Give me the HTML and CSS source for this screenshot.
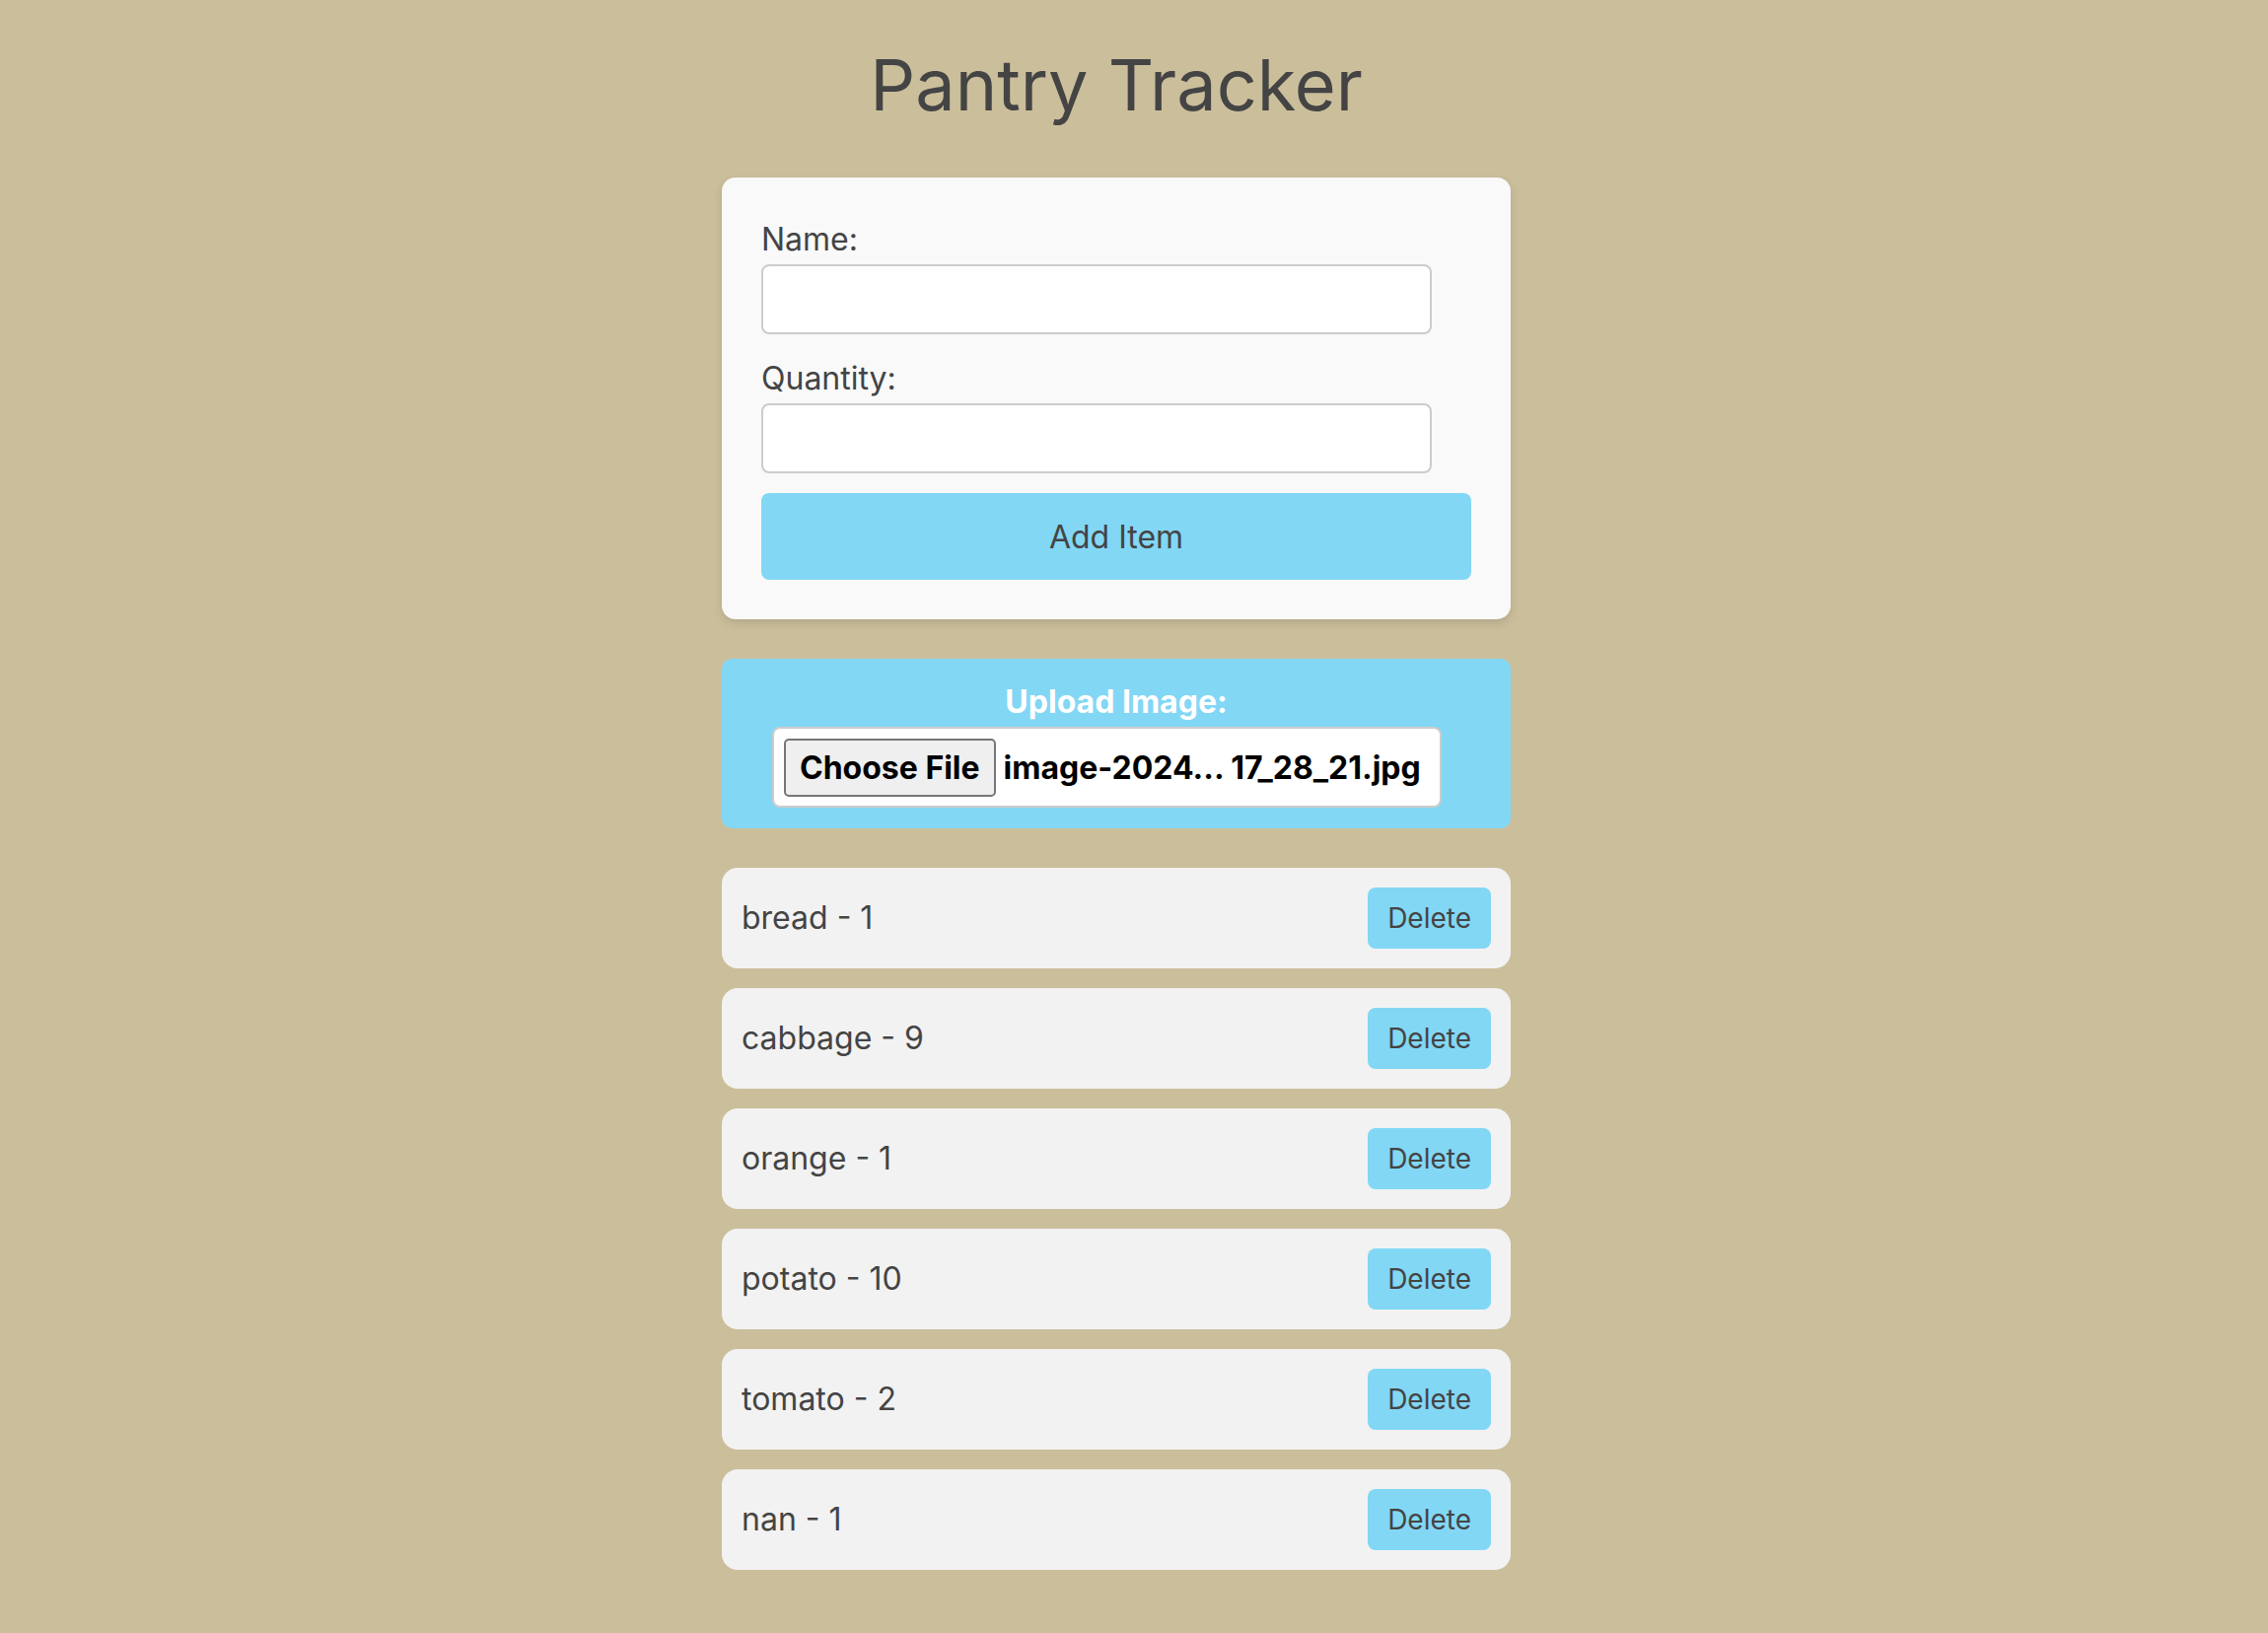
FILE: index.html
```html
<!DOCTYPE html>
<html lang="en">
<head>
<meta charset="utf-8">
<title>Pantry Tracker</title>
<link rel="stylesheet" href="styles.css">
</head>
<body>
<div class="app">
  <h1 class="title">Pantry Tracker</h1>

  <form class="card">
    <label class="field-label" for="name">Name:</label>
    <input class="text-input" id="name" type="text">
    <label class="field-label" for="qty">Quantity:</label>
    <input class="text-input" id="qty" type="text">
    <button class="add-btn" type="button">Add Item</button>
  </form>

  <div class="upload">
    <div class="upload-label">Upload Image:</div>
    <div class="file-input">
      <span class="file-btn">Choose File</span>
      <span class="file-name">image-2024... 17_28_21.jpg</span>
    </div>
  </div>

  <ul class="items">
    <li class="item"><span class="item-text">bread - 1</span><button class="del-btn" type="button">Delete</button></li>
    <li class="item"><span class="item-text">cabbage - 9</span><button class="del-btn" type="button">Delete</button></li>
    <li class="item"><span class="item-text">orange - 1</span><button class="del-btn" type="button">Delete</button></li>
    <li class="item"><span class="item-text">potato - 10</span><button class="del-btn" type="button">Delete</button></li>
    <li class="item"><span class="item-text">tomato - 2</span><button class="del-btn" type="button">Delete</button></li>
    <li class="item"><span class="item-text">nan - 1</span><button class="del-btn" type="button">Delete</button></li>
  </ul>
</div>
</body>
</html>
```

FILE: styles.css
```css
* { box-sizing: border-box; }

html, body {
  margin: 0;
  background: #cbbe9b;
}

body {
  padding: 0 36px 0 0;
  font-family: Inter, "Noto Sans", "Liberation Sans", sans-serif;
  color: #444;
}

.app {
  width: 800px;
  margin: 0 auto;
  display: flex;
  flex-direction: column;
}

.title {
  margin: 0 0 51px;
  padding-top: 42px;
  font-size: 72px;
  font-weight: 400;
  line-height: 87px;
  text-align: center;
  color: #444;
}

.card {
  background: #f9f9f9;
  border-radius: 14px;
  padding: 44px 40px 40px;
  box-shadow: 0 4px 10px rgba(0, 0, 0, 0.12);
  display: flex;
  flex-direction: column;
}

.field-label {
  display: block;
  font-size: 32px;
  line-height: 38px;
  margin-bottom: 6px;
  color: #444;
}

.text-input {
  width: 680px;
  height: 71px;
  border: 2px solid #ccc;
  border-radius: 8px;
  background: #fff;
  margin: 0 0 26px;
  font-family: inherit;
  font-size: 32px;
  padding: 0 12px;
}

.text-input + .add-btn { margin-top: -6px; }

.add-btn {
  width: 100%;
  height: 88px;
  border: none;
  border-radius: 8px;
  background: #82d7f5;
  color: #444;
  font-family: inherit;
  font-size: 32px;
  cursor: pointer;
}

.upload {
  margin-top: 40px;
  background: #82d7f5;
  border-radius: 10px;
  padding: 25px 0 21px;
  display: flex;
  flex-direction: column;
}

.upload-label {
  text-align: center;
  font-size: 32px;
  font-weight: 700;
  line-height: 38px;
  color: #fff;
  margin-bottom: 6px;
}

.file-input {
  margin-left: 51px;
  width: 679px;
  height: 82px;
  background: #fff;
  border: 2px solid #ccc;
  border-radius: 8px;
  display: flex;
  align-items: center;
  padding: 0 10px;
  gap: 8px;
  color: #000;
  font-size: 32px;
  font-weight: 700;
  white-space: nowrap;
}

.file-btn {
  height: 59px;
  display: flex;
  align-items: center;
  padding: 0 14px;
  background: #efefef;
  border: 2px solid #767676;
  border-radius: 5px;
}

.items {
  list-style: none;
  margin: 40px 0 0;
  padding: 0;
  display: flex;
  flex-direction: column;
  gap: 20px;
}

.item {
  background: #f2f2f2;
  border-radius: 16px;
  padding: 20px;
  display: flex;
  justify-content: space-between;
  align-items: center;
}

.item-text {
  font-size: 32px;
  line-height: 38px;
  color: #444;
}

.del-btn {
  height: 62px;
  padding: 0 20px;
  border: none;
  border-radius: 8px;
  background: #82d7f5;
  color: #444;
  font-family: inherit;
  font-size: 28px;
  line-height: 34px;
  cursor: pointer;
}
```
